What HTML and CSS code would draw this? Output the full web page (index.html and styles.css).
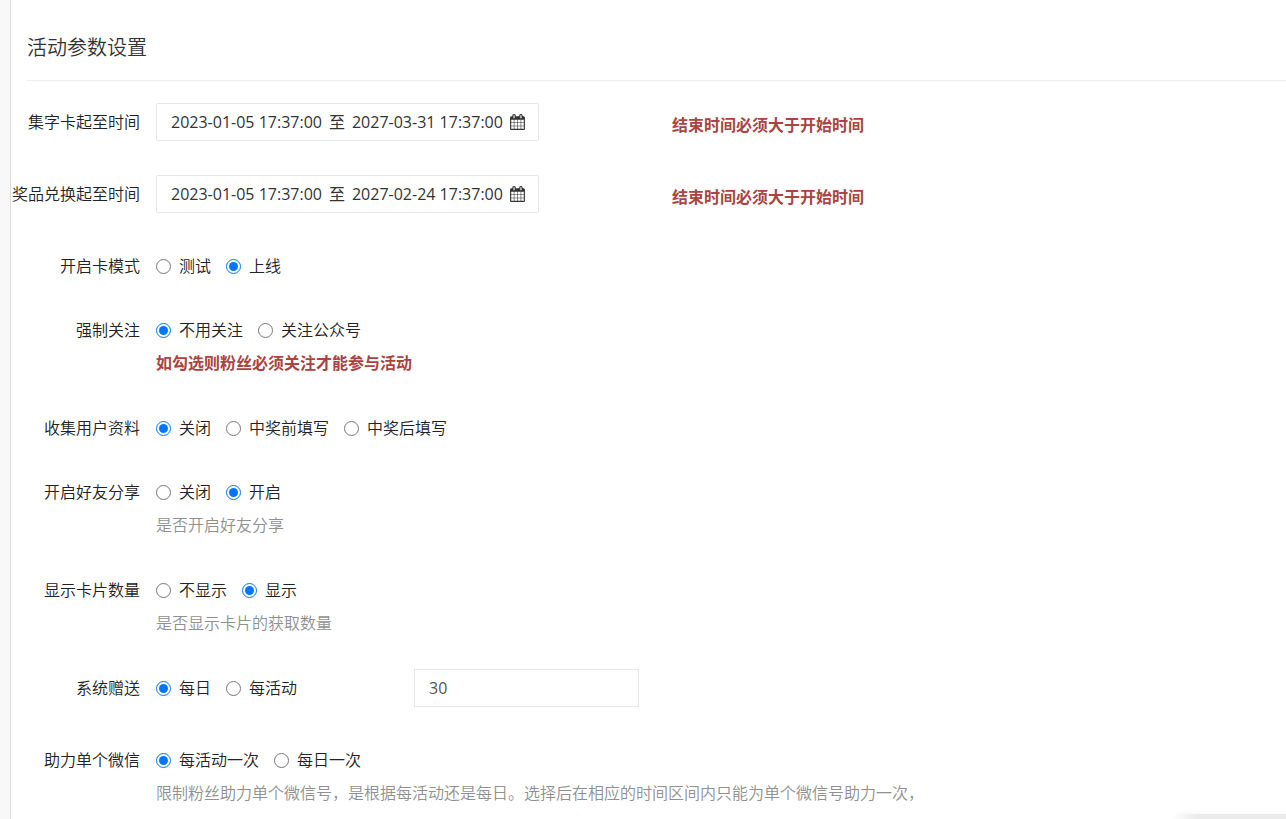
FILE: index.html
```
<!DOCTYPE html>
<html lang="zh-CN">
<head>
<meta charset="utf-8">
<title>活动参数设置</title>
<link rel="stylesheet" href="styles.css">
</head>
<body>
<svg width="0" height="0" class="sprite" aria-hidden="true">
  <symbol id="calendar" viewBox="0 0 1664 1792">
    <path d="M128 1664h288v-288h-288v288zM480 1664h320v-288h-320v288zM128 1312h288v-320h-288v320zM480 1312h320v-320h-320v320zM128 928h288v-288h-288v288zM864 1664h320v-288h-320v288zM480 928h320v-288h-320v288zM1248 1664h288v-288h-288v288zM864 1312h320v-320h-320v320zM512 448v-288q0-13-9.500-22.500t-22.500-9.500h-64q-13 0-22.500 9.500t-9.500 22.500v288q0 13 9.500 22.500t22.500 9.500h64q13 0 22.500-9.500t9.500-22.500zM1248 1312h288v-320h-288v320zM864 928h320v-288h-320v288zM1248 928h288v-288h-288v288zM1280 448v-288q0-13-9.500-22.500t-22.500-9.500h-64q-13 0-22.500 9.500t-9.500 22.500v288q0 13 9.500 22.500t22.500 9.500h64q13 0 22.500-9.500t9.500-22.500zM1664 384v1280q0 52-38 90t-90 38h-1408q-52 0-90-38t-38-90v-1280q0-52 38-90t90-38h128v-96q0-66 47-113t113-47h64q66 0 113 47t47 113v96h384v-96q0-66 47-113t113-47h64q66 0 113 47t47 113v96h128q52 0 90 38t38 90z"/>
  </symbol>
</svg>
<main class="panel">
  <h1 class="panel-title">活动参数设置</h1>
  <form class="settings">
    <div class="row">
      <label class="row-label" for="collect-time">集字卡起至时间</label>
      <div class="split">
        <div><button type="button" class="date-range" id="collect-time"><span>2023-01-05 17:37:00</span> <span>至</span> <span>2027-03-31 17:37:00</span> <svg class="icon" aria-hidden="true"><use href="#calendar"/></svg></button></div>
        <p class="hint warning">结束时间必须大于开始时间</p>
      </div>
    </div>
    <div class="row">
      <label class="row-label" for="prize-time">奖品兑换起至时间</label>
      <div class="split">
        <div><button type="button" class="date-range" id="prize-time"><span>2023-01-05 17:37:00</span> <span>至</span> <span>2027-02-24 17:37:00</span> <svg class="icon" aria-hidden="true"><use href="#calendar"/></svg></button></div>
        <p class="hint warning">结束时间必须大于开始时间</p>
      </div>
    </div>
    <div class="row" role="radiogroup" aria-labelledby="l-mode">
      <span class="row-label" id="l-mode">开启卡模式</span>
      <div>
        <div class="options">
          <label class="option"><input type="radio" name="mode">测试</label>
          <label class="option"><input type="radio" name="mode" checked>上线</label>
        </div>
      </div>
    </div>
    <div class="row" role="radiogroup" aria-labelledby="l-follow">
      <span class="row-label" id="l-follow">强制关注</span>
      <div>
        <div class="options">
          <label class="option"><input type="radio" name="follow" checked>不用关注</label>
          <label class="option"><input type="radio" name="follow">关注公众号</label>
        </div>
        <p class="hint warning">如勾选则粉丝必须关注才能参与活动</p>
      </div>
    </div>
    <div class="row" role="radiogroup" aria-labelledby="l-profile">
      <span class="row-label" id="l-profile">收集用户资料</span>
      <div>
        <div class="options">
          <label class="option"><input type="radio" name="profile" checked>关闭</label>
          <label class="option"><input type="radio" name="profile">中奖前填写</label>
          <label class="option"><input type="radio" name="profile">中奖后填写</label>
        </div>
      </div>
    </div>
    <div class="row" role="radiogroup" aria-labelledby="l-share">
      <span class="row-label" id="l-share">开启好友分享</span>
      <div>
        <div class="options">
          <label class="option"><input type="radio" name="share">关闭</label>
          <label class="option"><input type="radio" name="share" checked>开启</label>
        </div>
        <p class="hint">是否开启好友分享</p>
      </div>
    </div>
    <div class="row" role="radiogroup" aria-labelledby="l-count">
      <span class="row-label" id="l-count">显示卡片数量</span>
      <div>
        <div class="options">
          <label class="option"><input type="radio" name="count">不显示</label>
          <label class="option"><input type="radio" name="count" checked>显示</label>
        </div>
        <p class="hint">是否显示卡片的获取数量</p>
      </div>
    </div>
    <div class="row" role="radiogroup" aria-labelledby="l-gift">
      <span class="row-label" id="l-gift">系统赠送</span>
      <div class="gift">
        <div class="options">
          <label class="option"><input type="radio" name="gift" checked>每日</label>
          <label class="option"><input type="radio" name="gift">每活动</label>
        </div>
        <input class="text-input" type="text" value="30" aria-labelledby="l-gift">
      </div>
    </div>
    <div class="row" role="radiogroup" aria-labelledby="l-help">
      <span class="row-label" id="l-help">助力单个微信</span>
      <div>
        <div class="options">
          <label class="option"><input type="radio" name="help" checked>每活动一次</label>
          <label class="option"><input type="radio" name="help">每日一次</label>
        </div>
        <p class="hint">限制粉丝助力单个微信号，是根据每活动还是每日。选择后在相应的时间区间内只能为单个微信号助力一次，</p>
      </div>
    </div>
  </form>
</main>
<div class="corner-bar"></div>
</body>
</html>
```
FILE: styles.css
```
* {
  box-sizing: border-box;
}

body {
  margin: 0;
  padding-left: 10px;
  background: #f8f8f8;
  color: #222;
  font: 16px/23px "Open Sans", "Noto Sans CJK SC", sans-serif;
}

.sprite {
  position: absolute;
}

.panel {
  min-height: 100vh;
  border-left: 1px solid #ddd;
  background: #fff;
}

.panel-title {
  margin: 0 0 22px 16px;
  padding: 33px 0 17px;
  border-bottom: 1px solid #eee;
  color: #333;
  font-size: 20px;
  font-weight: 350;
  line-height: 30px;
}

.settings {
  display: flex;
  flex-direction: column;
  gap: 34px;
  font-weight: 350;
}

.row {
  display: grid;
  grid-template-columns: 129px 1fr;
  gap: 16px;
}

.row-label {
  height: 30px;
  padding-top: 8px;
  text-align: right;
  white-space: nowrap;
}

.split {
  display: grid;
  grid-template-columns: 516px 1fr;
}

.gift {
  display: grid;
  grid-template-columns: 258px 225px;
  align-items: start;
}

.options {
  display: flex;
  gap: 15px;
  height: 30px;
  padding-top: 8px;
}

.option {
  display: flex;
  align-items: center;
  gap: 8px;
}

.option input {
  width: 15px;
  height: 15px;
  margin: 0;
}

.hint {
  margin: 11px 0 0;
  color: #909090;
}

.warning {
  color: #a94442;
  font-weight: 700;
}

.date-range,
.text-input {
  height: 38px;
  padding: 0 14px;
  border: 1px solid #e7e7e7;
  background: #fff;
  color: #333;
  font: 16px/23px "Open Sans", "Noto Sans CJK SC", sans-serif;
}

.date-range {
  display: flex;
  align-items: center;
  gap: 7px;
  padding-right: 13px;
  border-radius: 2px;
  white-space: nowrap;
}

.text-input {
  width: 100%;
  color: #555;
}

.icon {
  width: 15px;
  height: 16px;
  fill: #333;
}

.corner-bar {
  position: fixed;
  right: 0;
  bottom: 0;
  width: 114px;
  height: 5px;
  background: linear-gradient(to right, #fff, #ebebeb 25px);
  box-shadow: 8px -1px 5px #f6f6f6;
}
```
